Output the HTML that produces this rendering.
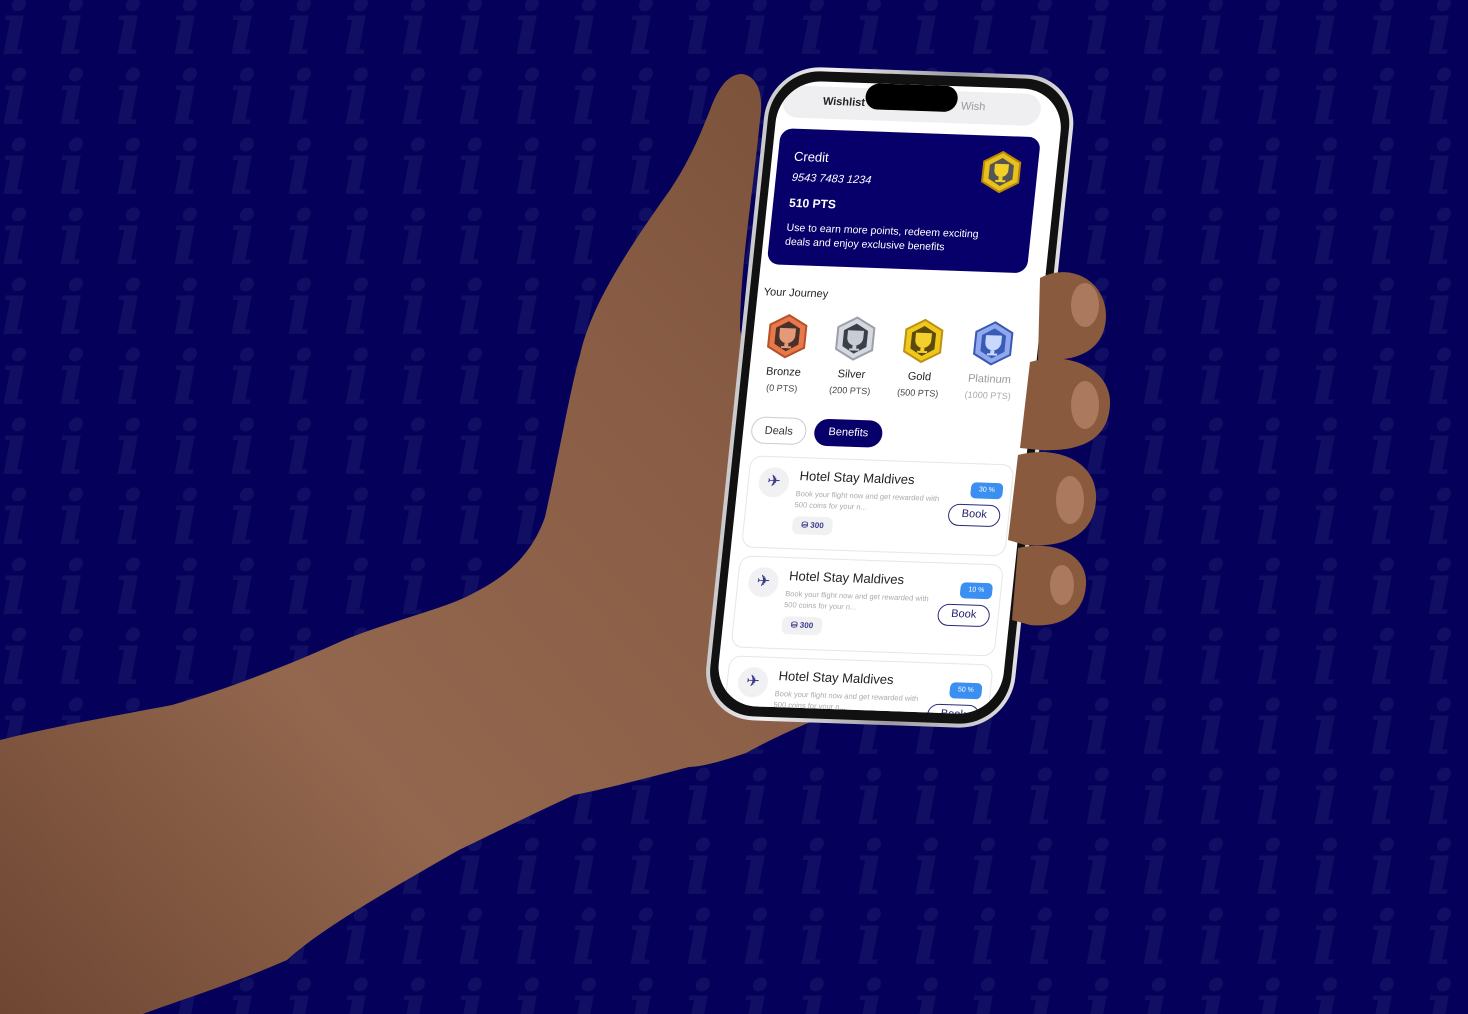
<!DOCTYPE html>
<html><head><meta charset="utf-8"><style>
*{margin:0;padding:0;box-sizing:border-box}
body{width:1468px;height:1014px;overflow:hidden;background:#05005a;font-family:"Liberation Sans",sans-serif;position:relative}
#bg{position:absolute;left:0;top:0}
#phone{position:absolute;left:0;top:0;transform-origin:0 0;transform:matrix(1,0.035,-0.105,1,780,80);width:285px;height:625px}
.frame{position:absolute;left:-12px;top:-14px;width:309px;height:653px;border-radius:52px;background:linear-gradient(90deg,#c9c9cc,#f2f2f4 20%,#9a9aa0 60%,#e0e0e2);}
.bezel{position:absolute;left:-8px;top:-10px;width:301px;height:645px;border-radius:48px;background:#111}
.screen{position:absolute;left:0;top:0;width:285px;height:625px;border-radius:42px;background:#fff;overflow:hidden}
.abs{position:absolute}
.tabs{left:5px;top:5px;width:258px;height:32px;border-radius:16px;background:#efeff1;font-size:11px;color:#222}
.notch{left:87px;top:0px;width:92px;height:26px;border-radius:14px;background:#000}
.card{left:6px;top:48px;width:260px;height:136px;border-radius:12px;background:#07006a;color:#fff}
.jt{font-size:11px;color:#222}
.lbl{font-size:11px;color:#222;text-align:center;width:60px}
.pts{font-size:9px;color:#444;text-align:center;width:60px}
.pill{border-radius:14px;font-size:11px;text-align:center;line-height:27px;height:27px}
.off{border:1px solid #ccc;color:#333;background:#fff}
.on{background:#07006a;color:#fff}
.deal{width:264px;height:92px;border:1px solid #e6e6e8;border-radius:12px;background:#fff}
.deal .ic{position:absolute;left:10px;top:10px;width:30px;height:30px;border-radius:50%;background:#f1f1f3;color:#3a3a8a;font-size:16px;text-align:center;line-height:30px}
.deal .t{position:absolute;left:50px;top:10px;font-size:13px;color:#222}
.deal .d{position:absolute;left:48px;top:30px;font-size:7.5px;color:#aaa;line-height:11px;width:150px}
.deal .c{position:absolute;left:48px;top:58px;width:40px;height:18px;border-radius:6px;background:#f1f1f3;font-size:8px;color:#3a3a8a;font-weight:bold;text-align:center;line-height:18px}
.deal .b{position:absolute;left:222px;top:18px;width:32px;height:16px;border-radius:5px;background:#3b8ff0;color:#fff;font-size:7px;text-align:center;line-height:16px}
.deal .k{position:absolute;left:202px;top:40px;width:52px;height:22px;border-radius:11px;border:1.5px solid #2a2a7a;color:#1d1d6a;font-size:11px;text-align:center;line-height:19px}
</style></head><body>
<svg id="bg" width="1468" height="1014" xmlns="http://www.w3.org/2000/svg">
<defs><pattern id="p" width="57" height="70" patternUnits="userSpaceOnUse" x="-5" y="-8">
<text x="6" y="62" font-family="DejaVu Serif" font-style="italic" font-weight="bold" font-size="74" fill="#110f63">i</text>
</pattern>
<linearGradient id="sk" x1="0" y1="1" x2="1" y2="0"><stop offset="0" stop-color="#6e4632"/><stop offset="0.35" stop-color="#93674e"/><stop offset="0.7" stop-color="#8a5e46"/><stop offset="1" stop-color="#7a5039"/></linearGradient>
</defs>
<rect width="1468" height="1014" fill="#05005a"/>
<rect width="1468" height="1014" fill="url(#p)"/>
<path d="M0 740 C60 725 120 715 172 705 C240 685 300 660 344 640 C400 618 440 610 470 595 C500 580 530 560 545 517 C560 450 570 390 580 355 C590 310 620 260 670 190 C690 160 700 135 710 110 C718 88 728 74 742 74 C758 76 764 95 760 120 C752 200 740 270 740 330 L840 710 C800 725 760 745 746 753 C720 762 700 767 689 767 C640 780 600 790 574 795 C520 820 480 840 459 850 C380 895 320 930 287 960 C230 985 180 1000 143 1014 L0 1014 Z" fill="url(#sk)"/>
</svg>
<div id="phone">
<div class="frame"></div><div class="bezel"></div>
<div class="screen">
 <div class="abs tabs"><span class="abs" style="left:40px;top:9px;font-weight:bold">Wishlist</span><span class="abs" style="left:178px;top:9px;color:#999">Wish</span></div>
 <div class="abs notch"></div>
 <div class="abs card">
  <div class="abs" style="left:16px;top:20px;font-size:13px">Credit</div>
  <div class="abs" style="left:16px;top:43px;font-size:11px;font-style:italic">9543 7483 1234</div>
  <div class="abs" style="left:16px;top:67px;font-size:12px;font-weight:bold">510 PTS</div>
  <div class="abs" style="left:16px;top:92px;font-size:10.5px;line-height:14px;width:220px">Use to earn more points, redeem exciting deals and enjoy exclusive benefits</div>
  <svg class="abs" style="left:202px;top:14px" width="44" height="44" viewBox="0 0 44 44"><polygon points="22,2 40,12 40,32 22,42 4,32 4,12" fill="#e8c21a" stroke="#b8860b" stroke-width="2"/><polygon points="22,8 34,15 34,29 22,36 10,29 10,15" fill="#555"/><path d="M15 14h14v6a7 7 0 0 1-14 0z M20 27h4v3h3v2h-10v-2h3z" fill="#f3d02a"/></svg>
 </div>
 <div class="abs jt" style="left:6px;top:206px">Your Journey</div>
 <svg class="abs" style="left:12px;top:232px" width="44" height="46" viewBox="0 0 44 46"><polygon points="22,2 40,12 40,34 22,44 4,34 4,12" fill="#e8784a" stroke="#b5502a" stroke-width="2"/><polygon points="22,8 34,15 34,31 22,38 10,31 10,15" fill="#4a3028"/><path d="M14 15h16v7a8 8 0 0 1-16 0z M20 30h4v3h3v2h-10v-2h3z" fill="#e39a78"/></svg>
 <svg class="abs" style="left:80px;top:232px" width="44" height="46" viewBox="0 0 44 46"><polygon points="22,2 40,12 40,34 22,44 4,34 4,12" fill="#d5d8de" stroke="#9aa0aa" stroke-width="2"/><polygon points="22,8 34,15 34,31 22,38 10,31 10,15" fill="#3b3f48"/><path d="M14 15h16v7a8 8 0 0 1-16 0z M20 30h4v3h3v2h-10v-2h3z" fill="#c8ccd4"/></svg>
 <svg class="abs" style="left:148px;top:232px" width="44" height="46" viewBox="0 0 44 46"><polygon points="22,2 40,12 40,34 22,44 4,34 4,12" fill="#f0c81c" stroke="#c09010" stroke-width="2"/><polygon points="22,8 34,15 34,31 22,38 10,31 10,15" fill="#5a4a10"/><path d="M14 15h16v7a8 8 0 0 1-16 0z M20 30h4v3h3v2h-10v-2h3z" fill="#f3d02a"/></svg>
 <svg class="abs" style="left:218px;top:232px" width="44" height="46" viewBox="0 0 44 46"><polygon points="22,2 40,12 40,34 22,44 4,34 4,12" fill="#8fa8ee" stroke="#3a5ab0" stroke-width="2"/><polygon points="22,8 34,15 34,31 22,38 10,31 10,15" fill="#3a5ab8"/><path d="M14 15h16v7a8 8 0 0 1-16 0z M20 30h4v3h3v2h-10v-2h3z" fill="#c8d8ff"/></svg>
 <div class="abs lbl" style="left:4px;top:285px">Bronze</div><div class="abs pts" style="left:4px;top:302px">(0 PTS)</div>
 <div class="abs lbl" style="left:72px;top:285px">Silver</div><div class="abs pts" style="left:72px;top:302px">(200 PTS)</div>
 <div class="abs lbl" style="left:140px;top:285px">Gold</div><div class="abs pts" style="left:140px;top:302px">(500 PTS)</div>
 <div class="abs lbl" style="left:210px;top:285px;color:#999">Platinum</div><div class="abs pts" style="left:210px;top:302px;color:#aaa">(1000 PTS)</div>
 <div class="abs pill off" style="left:8px;top:336px;width:55px">Deals</div>
 <div class="abs pill on" style="left:71px;top:336px;width:68px">Benefits</div>
 <div class="abs deal" style="left:10px;top:375px"><div class="ic">✈</div><div class="t">Hotel Stay Maldives</div><div class="d">Book your flight now and get rewarded with 500 coins for your n...</div><div class="c">⛁ 300</div><div class="b">30 %</div><div class="k">Book</div></div>
 <div class="abs deal" style="left:10px;top:475px"><div class="ic">✈</div><div class="t">Hotel Stay Maldives</div><div class="d">Book your flight now and get rewarded with 500 coins for your n...</div><div class="c">⛁ 300</div><div class="b">10 %</div><div class="k">Book</div></div>
 <div class="abs deal" style="left:10px;top:575px"><div class="ic">✈</div><div class="t">Hotel Stay Maldives</div><div class="d">Book your flight now and get rewarded with 500 coins for your n...</div><div class="c">⛁ 300</div><div class="b">50 %</div><div class="k">Book</div></div>
</div>
</div>
<svg class="abs" style="left:0;top:0;position:absolute" width="1468" height="1014">
<g fill="#8a5a3e">
<path d="M1040 278 C1070 262 1105 280 1106 315 C1106 345 1085 360 1050 360 L1038 360 Z"/>
<path d="M1030 362 C1070 350 1112 370 1110 405 C1108 440 1080 452 1040 450 L1020 448 Z"/>
<path d="M1018 455 C1055 445 1098 460 1096 500 C1094 535 1065 548 1025 545 L1008 540 Z"/>
<path d="M1018 548 C1050 540 1088 552 1086 585 C1084 615 1060 628 1030 625 L1012 620 Z"/>
</g>
<g fill="#c08f74" opacity="0.6">
<ellipse cx="1085" cy="305" rx="14" ry="22"/><ellipse cx="1085" cy="405" rx="14" ry="24"/><ellipse cx="1070" cy="500" rx="14" ry="24"/><ellipse cx="1062" cy="585" rx="12" ry="20"/>
</g>
</svg>
</body></html>
